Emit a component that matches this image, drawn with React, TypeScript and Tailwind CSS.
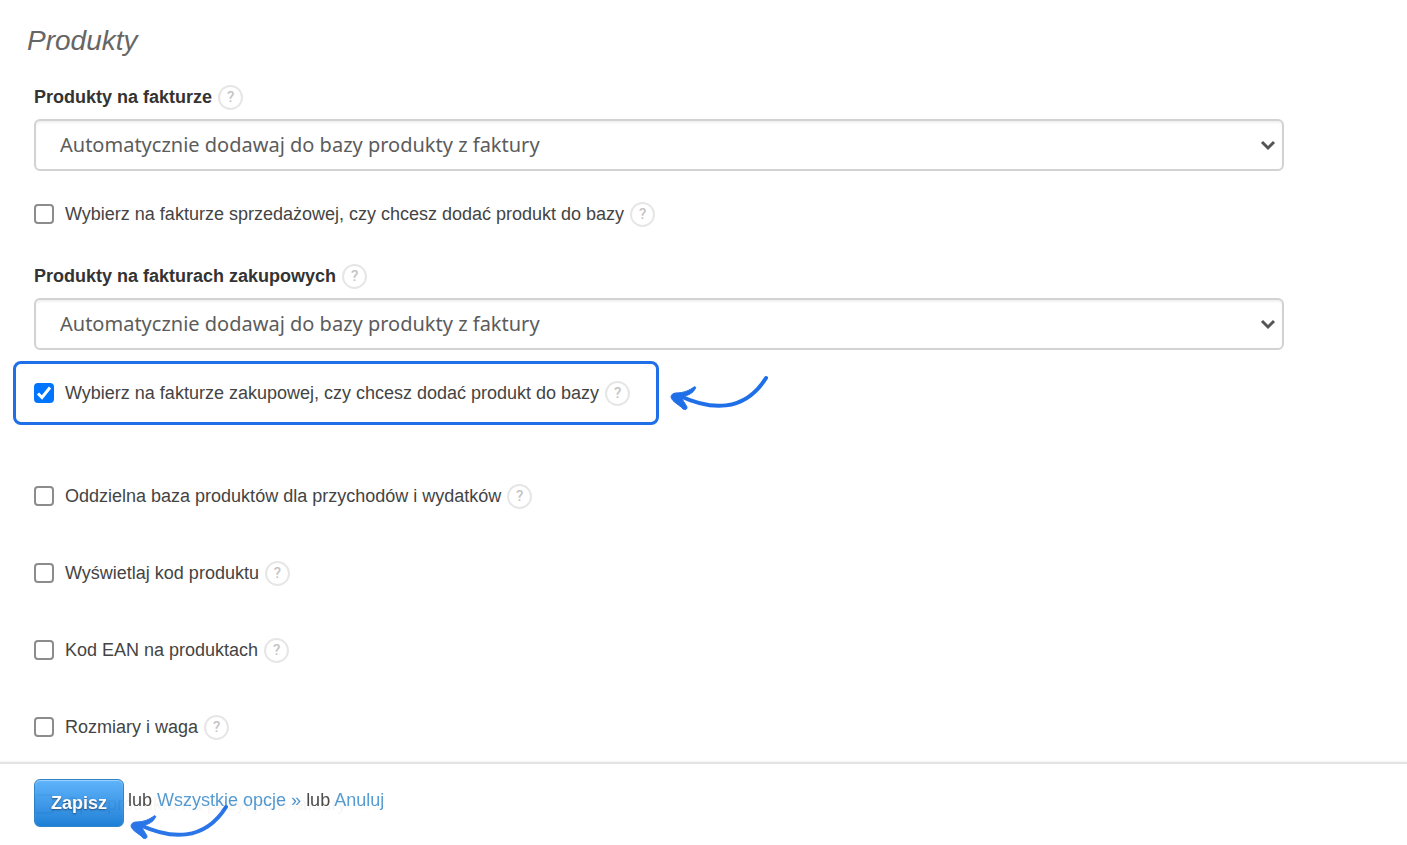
import { useId } from "react";

const SELECT_OPTIONS = [
  "Automatycznie dodawaj do bazy produkty z faktury",
  "Nie dodawaj do bazy produktów z faktury",
];

function Help() {
  return (
    <button
      type="button"
      aria-label="Pomoc"
      className="flex size-[25px] shrink-0 items-center justify-center rounded-full border-2 border-[#e6e6e6] bg-white font-[Roboto,Arial,sans-serif] text-[15px] leading-none font-medium text-[#c4c4c4]"
    >
      ?
    </button>
  );
}

function Arrow({ className }: { className: string }) {
  return (
    <svg viewBox="0 0 98 36" className={className} aria-hidden="true">
      <path
        d="M10 21 C40 35 74 38 96 3"
        fill="none"
        stroke="#1f6fe8"
        strokeWidth="4"
        strokeLinecap="round"
      />
      <path
        d="M1 22 C1 20 3 18 6 18 C14 18 20 15 24 12 C26 11 26 13 25 14 C23 18 19 20 12 22 C12 25 15 28 17 32 C17 35 15 35 13 34 C10 30 2 27 1 22 Z"
        fill="#1f6fe8"
        stroke="#1f6fe8"
        strokeLinejoin="round"
      />
    </svg>
  );
}

function SelectField({ label }: { label: string }) {
  const id = useId();
  return (
    <div>
      <div className="flex h-[26px] items-center gap-[6px]">
        <label htmlFor={id} className="font-bold text-[#333]">
          {label}
        </label>
        <Help />
      </div>
      <div className="relative mt-[9px]">
        <select
          id={id}
          className="block h-[52px] w-full appearance-none rounded-md border-2 border-[#d2d2d2] bg-white pr-12 pl-6 font-['Noto_Sans',sans-serif] text-[20px] leading-8 text-[#5c5c5c] shadow-[inset_0_2px_2px_rgba(0,0,0,0.06)]"
        >
          {SELECT_OPTIONS.map((o) => (
            <option key={o}>{o}</option>
          ))}
        </select>
        <svg
          viewBox="0 0 16 12"
          className="pointer-events-none absolute top-5 right-2 h-3 w-4"
          fill="none"
          stroke="#555"
          strokeWidth="3"
          aria-hidden="true"
        >
          <path d="M2 3 L8 9 L14 3" />
        </svg>
      </div>
    </div>
  );
}

function CheckRow({ label, checked = false }: { label: string; checked?: boolean }) {
  const id = useId();
  return (
    <div className="flex h-[26px] items-center">
      <span className="relative mr-[11px] flex size-5 shrink-0">
        <input
          id={id}
          type="checkbox"
          defaultChecked={checked}
          className="peer size-5 appearance-none rounded-[4px] border-2 border-[#8c8c8c] bg-white checked:border-[#0075ff] checked:bg-[#0075ff]"
        />
        <svg
          viewBox="0 0 20 20"
          className="pointer-events-none absolute inset-0 hidden size-5 peer-checked:block"
          fill="none"
          stroke="white"
          strokeWidth="3"
          aria-hidden="true"
        >
          <path d="M4 10.5 L8 14.5 L16 4.5" />
        </svg>
      </span>
      <label htmlFor={id} className="mr-[6px]">
        {label}
      </label>
      <Help />
    </div>
  );
}

export default function App() {
  return (
    <div className="min-h-screen bg-white font-['Liberation_Sans',Arial,sans-serif] text-lg leading-6 text-[#444]">
      <main className="pt-[25px] pr-[123px] pl-[34px]">
        <h1 className="-ml-[7px] text-[28px] leading-8 text-[#666] italic">Produkty</h1>

        <div className="mt-[27px]">
          <SelectField label="Produkty na fakturze" />
        </div>
        <div className="mt-[30px]">
          <CheckRow label="Wybierz na fakturze sprzedażowej, czy chcesz dodać produkt do bazy" />
        </div>

        <div className="mt-9">
          <SelectField label="Produkty na fakturach zakupowych" />
        </div>
        <div className="mt-[11px] -ml-[21px] flex items-center gap-[11px]">
          <div className="rounded-lg border-3 border-[#1f6fe8] py-4 pr-[26px] pl-[18px]">
            <CheckRow label="Wybierz na fakturze zakupowej, czy chcesz dodać produkt do bazy" checked />
          </div>
          <Arrow className="h-9 w-[98px] shrink-0" />
        </div>

        <div className="mt-[58px] flex flex-col gap-[51px]">
          <CheckRow label="Oddzielna baza produktów dla przychodów i wydatków" />
          <CheckRow label="Wyświetlaj kod produktu" />
          <CheckRow label="Kod EAN na produktach" />
          <CheckRow label="Rozmiary i waga" />
          <CheckRow label="Opis produktu na pozycjach faktury" />
        </div>
      </main>

      {/* slightly see-through bar, the list scrolls under it */}
      <footer className="fixed inset-x-0 bottom-0 flex h-[83px] items-start border-t-2 border-[#e2e2e2] bg-white pt-[15px] pl-[34px] opacity-95 shadow-[0_-1px_2px_rgba(0,0,0,0.06)]">
        <button
          type="submit"
          className="h-12 rounded-md border border-[#2a7fc4] bg-linear-to-b from-[#56b0fb] to-[#0f7ad4] px-4 font-bold text-white shadow-[inset_0_1px_1px_rgba(255,255,255,0.4)] text-shadow-[0_1px_2px_rgba(0,0,0,0.5)]"
        >
          Zapisz
        </button>
        <p className="mt-[9px] ml-1">
          lub{" "}
          <a href="#opcje" className="text-[#4f97d1]">
            Wszystkie opcje »
          </a>{" "}
          lub{" "}
          <a href="#anuluj" className="text-[#4f97d1]">
            Anuluj
          </a>
        </p>
        <Arrow className="pointer-events-none absolute top-10 left-[130px] h-9 w-[98px]" />
      </footer>
    </div>
  );
}
